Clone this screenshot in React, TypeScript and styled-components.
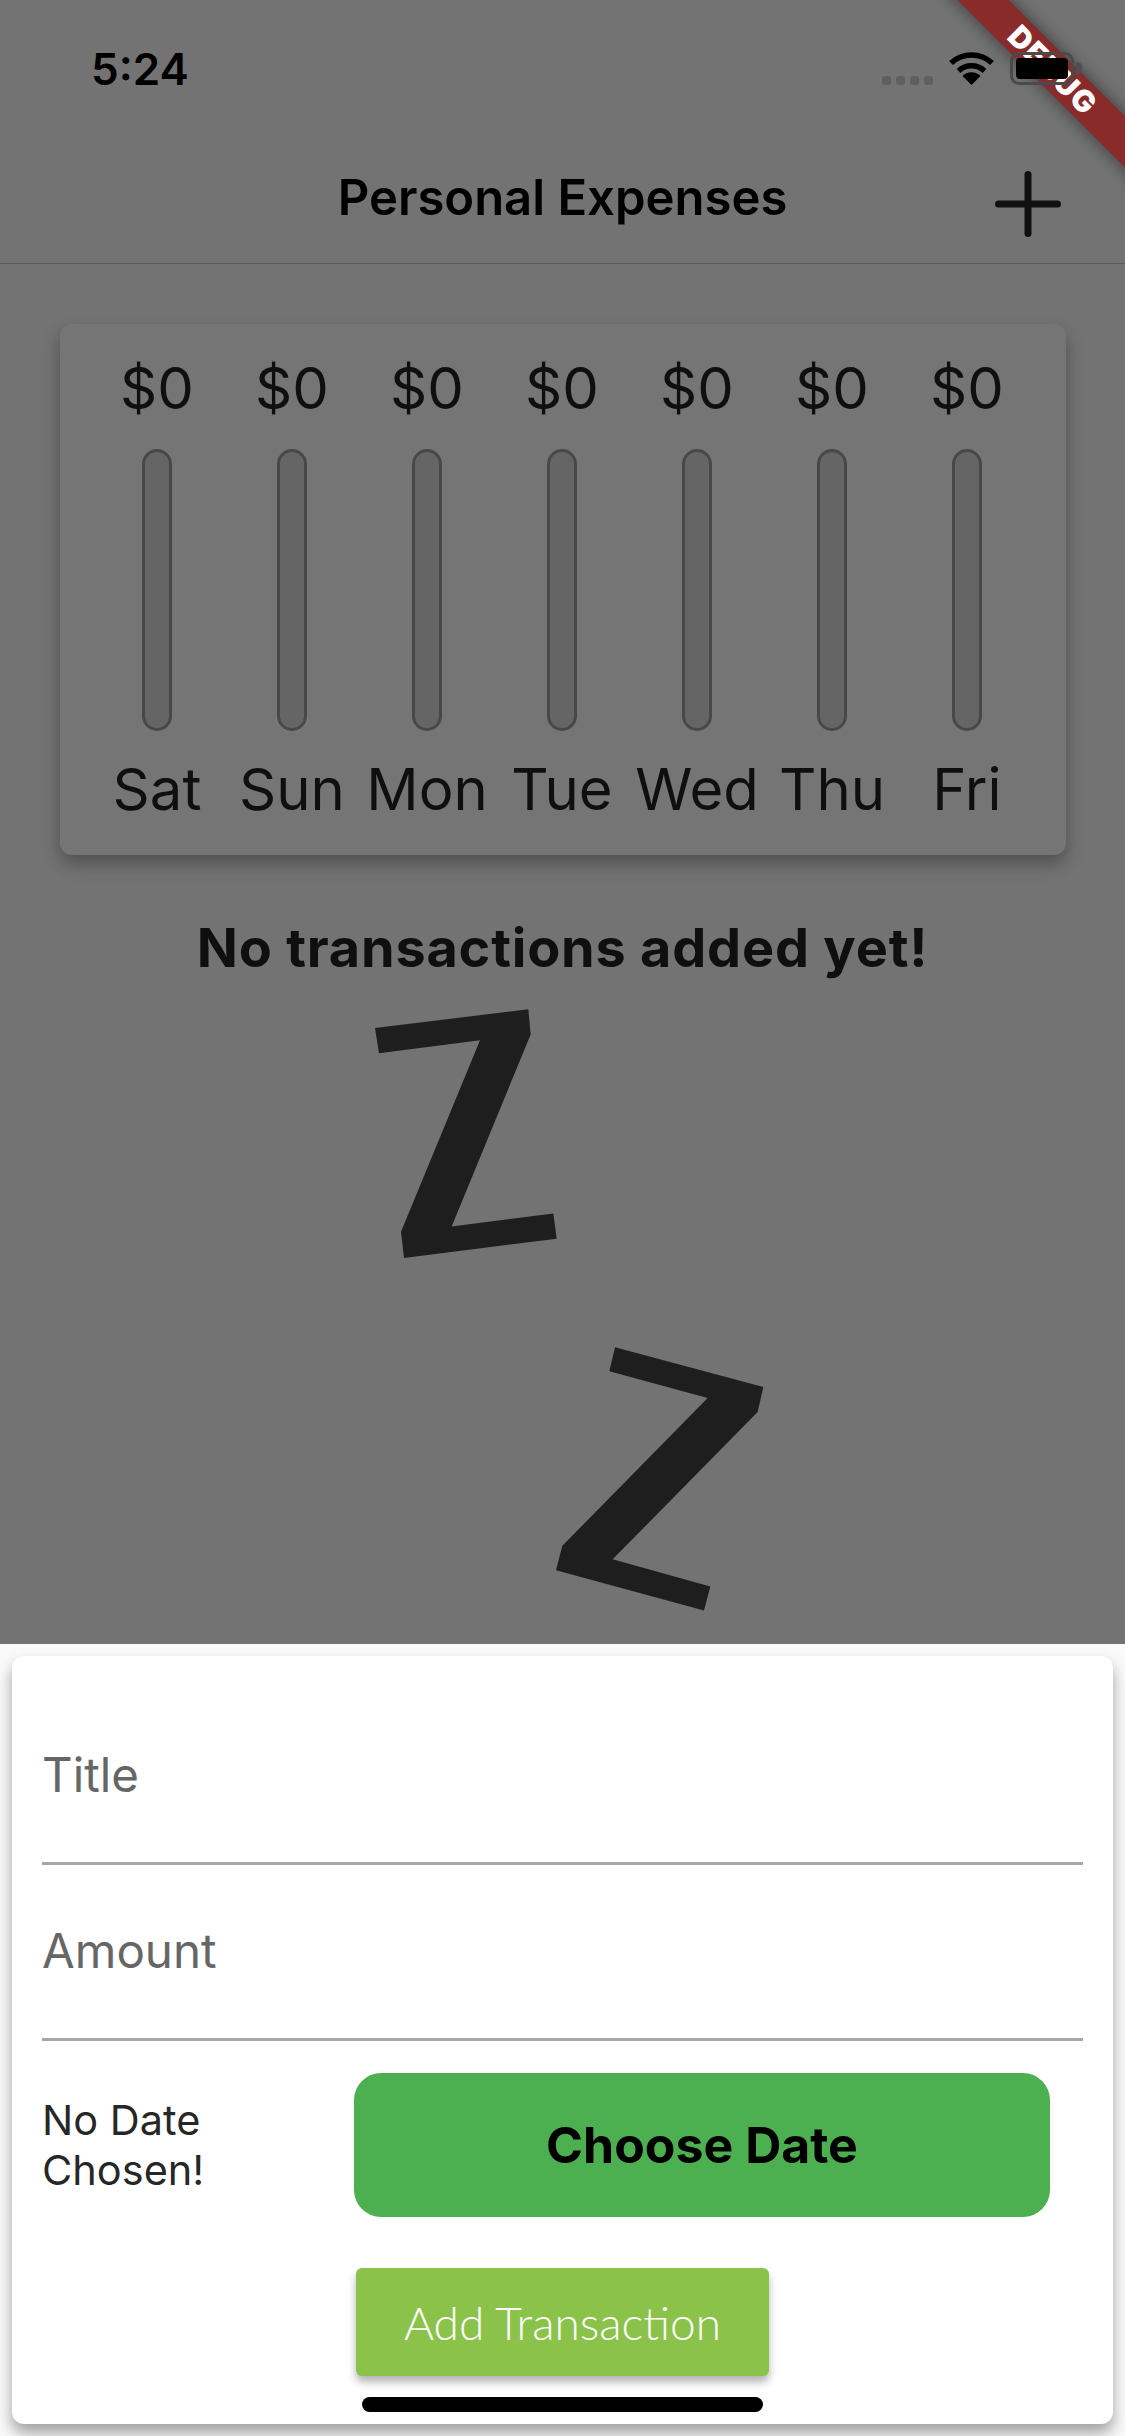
import React from "react";
import styled, { createGlobalStyle } from "styled-components";

const days = ["Sat", "Sun", "Mon", "Tue", "Wed", "Thu", "Fri"];

const GlobalStyle = createGlobalStyle`
  html, body {
    margin: 0;
    padding: 0;
    background: #fafafa;
  }
  * {
    box-sizing: border-box;
  }
`;

const Page = styled.div`
  position: relative;
  width: 1125px;
  height: 2436px;
  overflow: hidden;
  display: flex;
  flex-direction: column;
  background: #fafafa;
  font-family: Inter, "Liberation Sans", sans-serif;
  color: rgba(0, 0, 0, 0.87);
`;

const NavBar = styled.header`
  height: 264px;
  flex: none;
  padding-top: 167px;
  display: flex;
  align-items: flex-start;
  justify-content: center;
  position: relative;
  border-bottom: 1.5px solid #c4c4c4;
`;

const NavTitle = styled.h1`
  margin: 0;
  height: 62px;
  font-size: 49px;
  line-height: 62px;
  font-weight: 600;
  color: #000;
`;

const AddIcon = styled.svg`
  position: absolute;
  left: 995px;
  top: 171px;
  width: 66px;
  height: 66px;
`;

const Body = styled.main`
  height: 1380px;
  flex: none;
  display: flex;
  flex-direction: column;
  padding-top: 60px;
`;

const ChartCard = styled.section`
  flex: none;
  margin: 0 59px 0 60px;
  height: 531px;
  padding: 0 31.5px 0 29.5px;
  display: grid;
  grid-template-columns: repeat(7, 135px);
  background: #fff;
  border-radius: 12px;
  box-shadow: 0 9px 18px rgba(0, 0, 0, 0.3);
`;

const DayColumn = styled.div`
  display: flex;
  flex-direction: column;
  align-items: center;
`;

const Amount = styled.span`
  height: 125px;
  padding-top: 33px;
  font-size: 58px;
  line-height: 62px;
  white-space: nowrap;
`;

const Bar = styled.div`
  width: 30px;
  height: 282px;
  flex: none;
  background: #dcdcdc;
  border: 3px solid #9e9e9e;
  border-radius: 15px;
`;

const DayLabel = styled.span`
  margin-top: 27px;
  font-size: 58px;
  line-height: 62px;
  white-space: nowrap;
`;

const EmptyTitle = styled.h2`
  flex: none;
  margin: 58px 0 0;
  height: 67px;
  text-align: center;
  font-size: 54px;
  line-height: 70px;
  letter-spacing: 0.8px;
  font-weight: 700;
`;

const SleepPicture = styled.svg`
  margin: 0 0 0 330px;
  width: 460px;
  height: 664px;
  flex: none;
`;

const Scrim = styled.div`
  position: absolute;
  left: 0;
  top: 0;
  width: 100%;
  height: 1644px;
  background: rgba(0, 0, 0, 0.54);
`;

const DebugRibbon = styled.div`
  position: absolute;
  top: 52px;
  right: -78px;
  width: 300px;
  height: 36px;
  transform: rotate(45deg);
  display: flex;
  align-items: center;
  justify-content: center;
  background: #8a2b2b;
  box-shadow: 0 0 18px rgba(0, 0, 0, 0.5);
  color: #fff;
  font-size: 30px;
  font-weight: 900;
  line-height: 36px;
  letter-spacing: 1.5px;
`;

const StatusBar = styled.div`
  position: absolute;
  left: 0;
  top: 0;
  width: 100%;
  height: 132px;
`;

const Clock = styled.span`
  position: absolute;
  left: 91px;
  top: 42px;
  font-size: 44px;
  line-height: 54px;
  font-weight: 600;
  color: #000;
`;

const SignalDots = styled.div`
  position: absolute;
  left: 882px;
  top: 76px;
  display: flex;
  gap: 5px;
`;

const SignalDot = styled.i`
  display: block;
  width: 9px;
  height: 9px;
  border-radius: 3px;
  background: #5f5f5f;
`;

const WifiIcon = styled.svg`
  position: absolute;
  left: 949px;
  top: 52px;
  width: 45px;
  height: 33px;
`;

const Battery = styled.div`
  position: absolute;
  left: 1010px;
  top: 52px;
  width: 64px;
  height: 33px;
  padding: 3px;
  border: 3px solid #4a4a4a;
  border-radius: 9px;

  &::after {
    content: "";
    position: absolute;
    right: -11px;
    top: 7px;
    width: 6px;
    height: 13px;
    border-radius: 0 5px 5px 0;
    background: #4f4f4f;
  }
`;

const BatteryFill = styled.div`
  width: 100%;
  height: 100%;
  border-radius: 4px;
  background: #000;
`;

const Sheet = styled.section`
  flex: 1;
  padding: 12px 12px 0;
  overflow: hidden;
`;

const FormCard = styled.form`
  height: 768px;
  padding: 0 30px;
  display: flex;
  flex-direction: column;
  background: #fff;
  border-radius: 12px;
  box-shadow: 0 9px 15px rgba(0, 0, 0, 0.36);
`;

const Field = styled.div<{ $height: number }>`
  height: ${({ $height }) => $height}px;
  flex: none;
  display: flex;
  align-items: flex-end;
  padding: 0 0 56px 0;
  border-bottom: 3px solid #a6a6a6;
  font-size: 47.5px;
  line-height: 62px;
  color: #666;
`;

const DateRow = styled.div`
  margin-top: 32px;
  height: 144px;
  flex: none;
  display: flex;
  align-items: center;
`;

const DateNote = styled.p`
  margin: 0;
  width: 312px;
  font-size: 41.5px;
  line-height: 50px;
`;

const ChooseButton = styled.button`
  width: 696px;
  height: 144px;
  border: none;
  border-radius: 27px;
  background: #4caf50;
  color: #000;
  font-family: inherit;
  font-size: 50px;
  font-weight: 700;
`;

const SubmitButton = styled.button`
  align-self: center;
  margin: 51px 0 0;
  width: 413px;
  height: 108px;
  border: none;
  border-radius: 6px;
  background: #8bc34a;
  color: #fff;
  font-family: Lato, "Noto Sans", sans-serif;
  font-size: 46px;
  font-weight: 300;
  box-shadow: 0 6px 9px rgba(0, 0, 0, 0.3);
`;

const HomeIndicator = styled.div`
  position: absolute;
  left: 362px;
  top: 2397px;
  width: 401px;
  height: 15px;
  border-radius: 8px;
  background: #000;
`;

export default function App() {
  return (
    <Page>
      <GlobalStyle />
      <NavBar>
        <NavTitle>Personal Expenses</NavTitle>
        <AddIcon viewBox="0 0 66 66">
          <path d="M33 3.5V62.5M3.5 33H62.5" stroke="#262626" strokeWidth="7" strokeLinecap="round" fill="none" />
        </AddIcon>
      </NavBar>
      <Body>
        <ChartCard>
          {days.map((day) => (
            <DayColumn key={day}>
              <Amount>$0</Amount>
              <Bar />
              <DayLabel>{day}</DayLabel>
            </DayColumn>
          ))}
        </ChartCard>
        <EmptyTitle>No transactions added yet!</EmptyTitle>
        <SleepPicture viewBox="0 0 1380 1522" preserveAspectRatio="none">
          <path
            d="M135 110L595 67L602 125L365 565L670 535L680 593L222 637L213 577L450 138L147 168Z"
            fill="#424242"
          />
          <path
            d="M855 842L1300 933L1283 990L848 1328L1141 1390L1122 1445L678 1353L697 1297L1133 958L838 897Z"
            fill="#424242"
          />
        </SleepPicture>
      </Body>
      <Sheet>
        <FormCard>
          <Field $height={209}>Title</Field>
          <Field $height={176}>Amount</Field>
          <DateRow>
            <DateNote>
              No Date
              <br />
              Chosen!
            </DateNote>
            <ChooseButton type="button">Choose Date</ChooseButton>
          </DateRow>
          <SubmitButton type="button">Add Transaction</SubmitButton>
        </FormCard>
      </Sheet>
      <Scrim />
      <DebugRibbon>DEBUG</DebugRibbon>
      <StatusBar>
        <Clock>5:24</Clock>
        <SignalDots>
          <SignalDot />
          <SignalDot />
          <SignalDot />
          <SignalDot />
        </SignalDots>
        <WifiIcon viewBox="0 0 45 33">
          <path d="M2 11A30 30 0 0 1 43 11" stroke="#000" strokeWidth="5.5" fill="none" />
          <path d="M9.5 19A19 19 0 0 1 35.5 19" stroke="#000" strokeWidth="5.5" fill="none" />
          <path d="M22.5 33L13.5 24A12.7 12.7 0 0 1 31.5 24Z" fill="#000" />
        </WifiIcon>
        <Battery>
          <BatteryFill />
        </Battery>
      </StatusBar>
      <HomeIndicator />
    </Page>
  );
}
